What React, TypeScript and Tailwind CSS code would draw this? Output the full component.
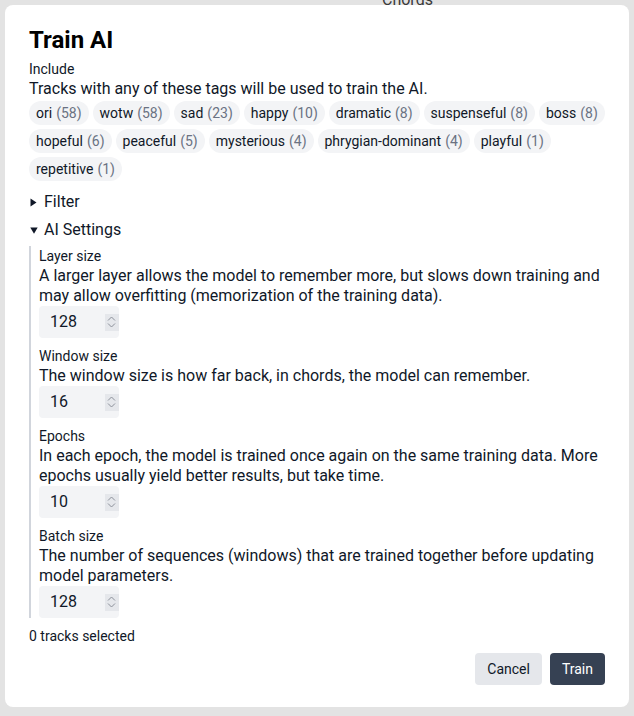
import React from 'react';

const tags: [string, number][] = [
  ['ori', 58],
  ['wotw', 58],
  ['sad', 23],
  ['happy', 10],
  ['dramatic', 8],
  ['suspenseful', 8],
  ['boss', 8],
  ['hopeful', 6],
  ['peaceful', 5],
  ['mysterious', 4],
  ['phrygian-dominant', 4],
  ['playful', 1],
  ['repetitive', 1],
];

const settings = [
  {
    label: 'Layer size',
    help: 'A larger layer allows the model to remember more, but slows down training and may allow overfitting (memorization of the training data).',
    value: 128,
  },
  {
    label: 'Window size',
    help: 'The window size is how far back, in chords, the model can remember.',
    value: 16,
  },
  {
    label: 'Epochs',
    help: 'In each epoch, the model is trained once again on the same training data. More epochs usually yield better results, but take time.',
    value: 10,
  },
  {
    label: 'Batch size',
    help: 'The number of sequences (windows) that are trained together before updating model parameters.',
    value: 128,
  },
];

function Spinner() {
  return (
    <span className="flex h-[17px] w-[18px] flex-col items-center justify-center gap-[2px] bg-gray-200">
      <svg width="9" height="5" viewBox="0 0 9 5" fill="none" stroke="#8b8f99" strokeWidth="1">
        <path d="M1 4.5 L4.5 1 L8 4.5" />
      </svg>
      <svg width="9" height="5" viewBox="0 0 9 5" fill="none" stroke="#8b8f99" strokeWidth="1">
        <path d="M1 0.5 L4.5 4 L8 0.5" />
      </svg>
    </span>
  );
}

function Marker({ open }: { open?: boolean }) {
  return open ? (
    <svg width="8" height="7" viewBox="0 0 8 7" className="mr-[6px]">
      <path d="M0.3 0.5 H7.7 L4 6.8 Z" fill="currentColor" />
    </svg>
  ) : (
    <svg width="7" height="9" viewBox="0 0 7 9" className="mr-[7px]">
      <path d="M0.5 0.5 V8.5 L6.5 4.5 Z" fill="currentColor" />
    </svg>
  );
}

function NumberField({ label, help, value }: { label: string; help: string; value: number }) {
  return (
    <div className="flex flex-col">
      <span className="text-sm leading-5">{label}</span>
      <p className="text-base leading-5">{help}</p>
      <div className="flex h-8 w-20 items-center rounded bg-gray-100 pl-[11px]">
        <input
          type="text"
          readOnly
          value={value}
          className="w-full min-w-0 bg-transparent text-base outline-none"
        />
        <Spinner />
      </div>
    </div>
  );
}

function Backdrop() {
  const rows = Array.from({ length: 17 });
  return (
    <div className="flex h-[716px] w-[634px] overflow-hidden bg-[#e3e3e3] text-[#3a3a3a]">
      <div className="-ml-[30px] flex w-[36px] flex-col gap-[14px] pt-[26px]">
        {rows.map((_, i) => (
          <span key={i} className="w-fit bg-[#cfcfcf] px-1 text-sm leading-5">
            ext
          </span>
        ))}
      </div>
      <div className="flex flex-1 flex-col">
        <div className="-mt-[12px] pl-[376px] text-base">Chords</div>
        <div className="flex flex-col gap-[18px] pl-[590px] pt-[14px] text-base">
          {['Gi', 'b', 'C', 'B', 's', 'C', 'A', 's', 'p', 's', 'C', 'b', 'C', 'b', 'n', 'b'].map((t, i) => (
            <span key={i} className="leading-4">
              {t}
            </span>
          ))}
        </div>
      </div>
    </div>
  );
}

export default function App() {
  return (
    <div className="relative h-[716px] w-[634px] overflow-hidden font-['Roboto',sans-serif] text-gray-900">
      <Backdrop />
      <div className="absolute left-[5px] right-[5px] top-[5px] flex flex-col rounded-lg bg-white px-6 pb-[22px] pt-[19px]">
        <h2 className="text-2xl font-bold leading-8 text-black">Train AI</h2>
        <span className="mt-[5px] text-sm leading-4">Include</span>
        <p className="text-base leading-6">Tracks with any of these tags will be used to train the AI.</p>
        <div className="flex flex-wrap gap-1">
          {tags.map(([name, count]) => (
            <span key={name} className="flex h-6 items-center rounded-full bg-gray-100 px-[7px] text-sm">
              {name}
              <span className="ml-1 text-gray-500">({count})</span>
            </span>
          ))}
        </div>

        <details className="mt-[9px]">
          <summary className="flex cursor-pointer list-none items-center pl-[1px] text-base leading-6">
            <Marker />
            Filter
          </summary>
        </details>
        <details open className="mt-1">
          <summary className="flex cursor-pointer list-none items-center pl-[1px] text-base leading-6">
            <Marker open />
            AI Settings
          </summary>
          <div className="mt-[4px] flex flex-col gap-2 border-l-2 border-gray-300 pl-2">
            {settings.map((s) => (
              <NumberField key={s.label} {...s} />
            ))}
          </div>
        </details>

        <span className="mt-2 text-sm leading-5">0 tracks selected</span>
        <div className="mt-[7px] flex justify-end gap-2">
          <button className="h-8 rounded bg-gray-200 px-3 text-sm">Cancel</button>
          <button className="h-8 rounded bg-gray-700 px-3 text-sm text-white">Train</button>
        </div>
      </div>
    </div>
  );
}
